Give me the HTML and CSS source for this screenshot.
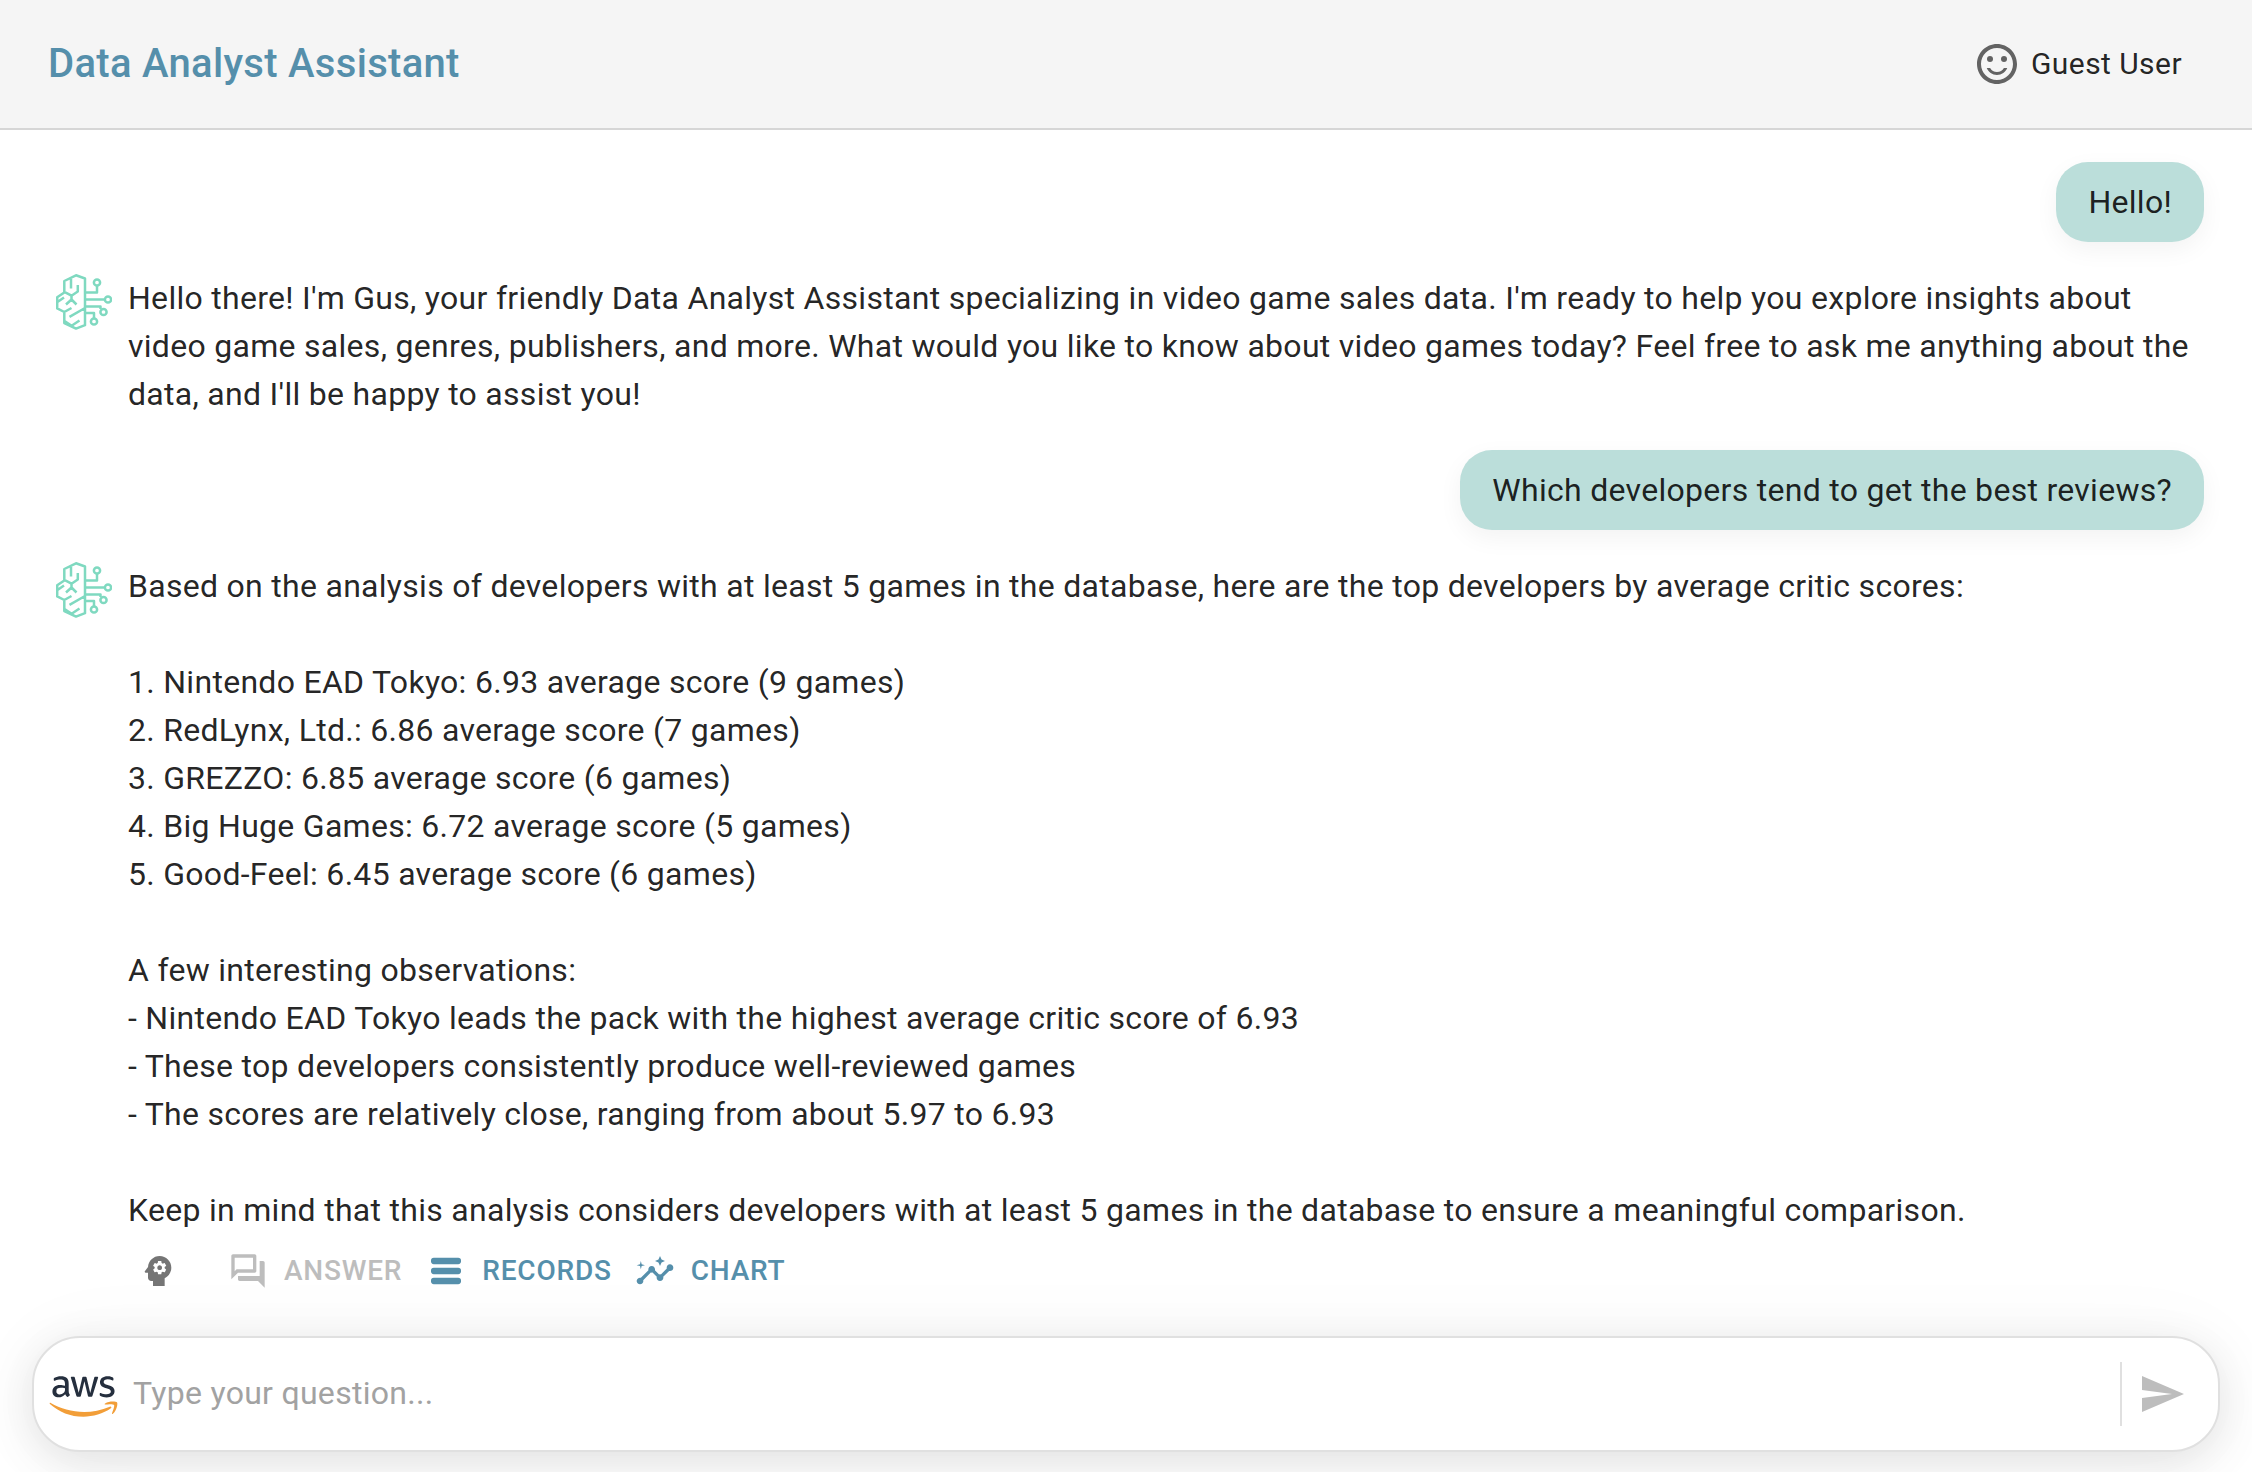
FILE: index.html
```html
<!DOCTYPE html>
<html lang="en">
<head>
<meta charset="utf-8">
<title>Data Analyst Assistant</title>
<link rel="stylesheet" href="styles.css">
</head>
<body>
<svg class="sprite" aria-hidden="true">
  <symbol id="brain" viewBox="0 0 56 56">
    <g fill="none" stroke="#7fd9c0" stroke-width="2.5" stroke-linejoin="round">
      <path d="M29 4.500 20 1.300 8.300 7v11.500L1.200 23.300v11L8.300 38v11L20 54.600l9-3.400zM15 5v9.500M21.800 11v6.500L15.500 21.700 8.300 17.800M15.500 21.700v4M10 30.500l5.500-5 5 5M1.500 28l6.500-4.500M8.300 38l7.200-4M13.500 42.800 29 34M8.500 47l7.500 5M16 51.500l7.500-5"/>
      <path d="M30 18.500h11V12M30 25.500h18.500M30 32.500h14.500v2.500M30 39h8v5"/>
      <circle cx="41" cy="8.500" r="3.100"/><circle cx="52" cy="25.500" r="3.100"/><circle cx="47.500" cy="38" r="3.100"/><circle cx="38" cy="47.500" r="3.100"/>
    </g>
  </symbol>
</svg>
<header class="topbar">
  <h1 class="brand">Data Analyst Assistant</h1>
  <div class="user">
    <svg class="user-icon" viewBox="0 0 24 24"><circle cx="15.5" cy="9.500" r="1.500"/><circle cx="8.500" cy="9.500" r="1.500"/><path d="M11.990 2C6.470 2 2 6.480 2 12s4.470 10 9.990 10C17.520 22 22 17.520 22 12S17.520 2 11.990 2M12 20c-4.420 0-8-3.580-8-8s3.580-8 8-8 8 3.580 8 8-3.580 8-8 8m0-4c-1.480 0-2.750-.81-3.450-2H6.880c.8 2.050 2.790 3.500 5.120 3.500s4.320-1.450 5.120-3.500h-1.670c-.7 1.190-1.970 2-3.450 2"/></svg>
    <span>Guest User</span>
  </div>
</header>
<main class="chat">
  <div class="bubble">Hello!</div>
  <section class="reply">
    <svg class="avatar"><use href="#brain"/></svg>
    <p class="text">Hello there! I'm Gus, your friendly Data Analyst Assistant specializing in video game sales data. I'm ready to help you explore insights about video game sales, genres, publishers, and more. What would you like to know about video games today? Feel free to ask me anything about the data, and I'll be happy to assist you!</p>
  </section>
  <div class="bubble">Which developers tend to get the best reviews?</div>
  <section class="reply">
    <svg class="avatar"><use href="#brain"/></svg>
    <div>
      <p class="text">Based on the analysis of developers with at least 5 games in the database, here are the top developers by average critic scores:

1. Nintendo EAD Tokyo: 6.93 average score (9 games)
2. RedLynx, Ltd.: 6.86 average score (7 games)
3. GREZZO: 6.85 average score (6 games)
4. Big Huge Games: 6.72 average score (5 games)
5. Good-Feel: 6.45 average score (6 games)

A few interesting observations:
- Nintendo EAD Tokyo leads the pack with the highest average critic score of 6.93
- These top developers consistently produce well-reviewed games
- The scores are relatively close, ranging from about 5.97 to 6.93

Keep in mind that this analysis considers developers with at least 5 games in the database to ensure a meaningful comparison.</p>
      <div class="actions">
        <svg class="thinking" viewBox="0 0 24 24"><path d="M13 8.570c-.79 0-1.430.64-1.430 1.430s.64 1.430 1.430 1.430 1.430-.64 1.430-1.430-.64-1.430-1.430-1.430"/><path d="M13 3C9.250 3 6.200 5.940 6.020 9.640L4.100 12.200c-.25.330-.01.800.400.800H6v3c0 1.100.900 2 2 2h1v3h7v-4.680c2.360-1.120 4-3.530 4-6.320 0-3.870-3.130-7-7-7m3 7c0 .130-.01.260-.02.390l.83.660c.08.060.100.160.05.250l-.8 1.390c-.05.090-.16.120-.24.090l-.99-.4c-.21.160-.43.290-.67.390L14 13.830c-.01.100-.1.170-.2.170h-1.600c-.1 0-.18-.07-.2-.17l-.15-1.060c-.25-.1-.47-.23-.68-.39l-.99.400c-.09.030-.2 0-.25-.09l-.8-1.390c-.05-.08-.03-.19.050-.25l.84-.66c-.01-.13-.02-.26-.02-.39s.02-.27.040-.39l-.85-.66c-.08-.06-.1-.16-.05-.26l.8-1.380c.05-.09.150-.12.240-.09l1 .4c.2-.15.430-.29.670-.39L12 6.170c.02-.1.100-.17.200-.17h1.600c.1 0 .180.070.200.170l.15 1.060c.24.100.460.230.670.390l1-.4c.09-.03.200 0 .240.090l.8 1.380c.05.090.030.200-.05.260l-.85.660c.03.120.040.250.040.390"/></svg>
        <button class="action answer" disabled><svg viewBox="0 0 24 24"><path d="M15 4v7H5.170L4 12.170V4zm1-2H3c-.55 0-1 .45-1 1v14l4-4h10c.55 0 1-.45 1-1V3c0-.55-.45-1-1-1m5 4h-2v9H6v2c0 .55.450 1 1 1h11l4 4V7c0-.55-.45-1-1-1"/></svg>ANSWER</button>
        <button class="action records"><svg viewBox="0 0 24 24"><rect x="3" y="4" width="18" height="3.900" rx="1.700"/><rect x="3" y="10" width="18" height="3.900" rx="1.700"/><rect x="3" y="16" width="18" height="3.900" rx="1.700"/></svg>RECORDS</button>
        <button class="action chart"><svg viewBox="0 0 24 24"><path d="M21 8c-1.450 0-2.260 1.440-1.930 2.510l-3.550 3.560c-.3-.09-.74-.09-1.040 0l-2.550-2.550C12.270 10.450 11.460 9 10 9c-1.450 0-2.270 1.440-1.930 2.520l-4.560 4.550C2.440 15.740 1 16.550 1 18c0 1.100.900 2 2 2 1.450 0 2.260-1.440 1.930-2.510l4.550-4.560c.3.090.740.090 1.040 0l2.550 2.550C12.730 16.550 13.540 18 15 18c1.450 0 2.270-1.440 1.930-2.520l3.560-3.550c1.070.330 2.510-.48 2.510-1.930 0-1.100-.9-2-2-2"/><path d="m15 9 .940-2.070L18 6l-2.060-.93L15 3l-.92 2.070L12 6l2.080.930zM3.500 11 4 9l2-.5L4 8l-.5-2L3 8l-2 .5L3 9z"/></svg>CHART</button>
      </div>
    </div>
  </section>
</main>
<footer class="composer">
  <svg class="aws" viewBox="0 0 304 182"><path fill="#252f3e" d="M86.400 66.400c0 3.700.400 6.700 1.100 8.900.8 2.200 1.800 4.600 3.200 7.200.5.800.700 1.600.700 2.300 0 1-.6 2-1.900 3l-6.300 4.200c-.9.600-1.800.900-2.600.900-1 0-2-.5-3-1.400-1.400-1.500-2.600-3.100-3.600-4.700-1-1.700-2-3.600-3.100-5.900-7.800 9.200-17.600 13.800-29.400 13.800-8.400 0-15.100-2.400-20-7.200-4.900-4.800-7.400-11.200-7.400-19.200 0-8.500 3-15.400 9.100-20.600 6.100-5.200 14.200-7.800 24.500-7.800 3.400 0 6.900.3 10.600.8 3.700.5 7.500 1.300 11.500 2.200v-7.300c0-7.600-1.600-12.900-4.700-16-3.200-3.100-8.600-4.600-16.300-4.600-3.500 0-7.100.4-10.800 1.300-3.700.9-7.300 2-10.800 3.400-1.600.7-2.800 1.100-3.500 1.300-.7.200-1.200.3-1.600.3-1.400 0-2.100-1-2.100-3.100v-4.900c0-1.600.2-2.800.7-3.500.5-.7 1.400-1.400 2.800-2.100 3.500-1.800 7.700-3.300 12.600-4.500 4.900-1.300 10.100-1.900 15.600-1.900 11.900 0 20.600 2.700 26.200 8.100 5.500 5.400 8.300 13.600 8.300 24.600v32.400zM45.800 81.600c3.300 0 6.700-.6 10.300-1.800 3.600-1.200 6.800-3.400 9.500-6.400 1.600-1.900 2.800-4 3.400-6.400.6-2.400 1-5.300 1-8.700v-4.200c-2.900-.7-6-1.300-9.200-1.700-3.200-.4-6.300-.6-9.400-.6-6.700 0-11.600 1.300-14.900 4-3.300 2.700-4.900 6.500-4.900 11.500 0 4.700 1.200 8.200 3.700 10.600 2.400 2.500 5.900 3.700 10.500 3.700zm80.300 10.800c-1.800 0-3-.3-3.800-1-.8-.6-1.500-2-2.100-3.900L96.700 10.200c-.6-2-.9-3.300-.9-4 0-1.600.8-2.500 2.400-2.500h9.800c1.900 0 3.200.3 3.900 1 .8.600 1.400 2 2 3.900l16.800 66.200 15.600-66.200c.5-2 1.100-3.300 1.900-3.900.8-.6 2.200-1 4-1h8c1.900 0 3.200.3 4 1 .8.600 1.500 2 1.900 3.900l15.800 67 17.300-67c.6-2 1.300-3.300 2-3.900.8-.6 2.100-1 3.900-1h9.300c1.600 0 2.500.8 2.500 2.500 0 .5-.1 1-.2 1.600-.1.600-.3 1.400-.7 2.500l-24.100 77.300c-.6 2-1.300 3.300-2.100 3.900-.8.600-2.100 1-3.800 1h-8.600c-1.900 0-3.200-.3-4-1-.8-.7-1.500-2-1.900-4L156 23l-15.400 64.400c-.5 2-1.100 3.300-1.900 4-.8.700-2.200 1-4 1zm128.500 2.700c-5.200 0-10.400-.6-15.400-1.800-5-1.200-8.900-2.500-11.500-4-1.600-.9-2.700-1.900-3.100-2.800-.4-.9-.6-1.900-.6-2.800v-5.100c0-2.100.8-3.100 2.300-3.100.6 0 1.200.1 1.800.3.600.2 1.500.6 2.500 1 3.400 1.500 7.100 2.700 11 3.500 4 .8 7.900 1.200 11.900 1.200 6.300 0 11.200-1.100 14.600-3.300 3.400-2.200 5.200-5.400 5.200-9.500 0-2.800-.9-5.100-2.700-7-1.800-1.900-5.200-3.600-10.100-5.200L246 52c-7.300-2.300-12.700-5.700-16-10.200-3.300-4.400-5-9.300-5-14.500 0-4.200.9-7.900 2.700-11.100 1.800-3.200 4.200-6 7.200-8.200 3-2.300 6.400-4 10.400-5.200 4-1.200 8.200-1.700 12.600-1.700 2.200 0 4.500.1 6.700.4 2.300.3 4.400.7 6.500 1.100 2 .5 3.900 1 5.700 1.600 1.800.6 3.200 1.200 4.200 1.800 1.400.8 2.400 1.600 3 2.500.6.800.9 1.900.9 3.300v4.700c0 2.100-.8 3.200-2.300 3.200-.8 0-2.100-.4-3.800-1.200-5.700-2.600-12.100-3.900-19.200-3.900-5.700 0-10.200.9-13.300 2.800-3.100 1.900-4.700 4.800-4.700 8.900 0 2.800 1 5.200 3 7.100 2 1.900 5.700 3.800 11 5.500l14.200 4.500c7.200 2.300 12.400 5.500 15.500 9.600 3.100 4.100 4.600 8.800 4.600 14 0 4.300-.9 8.200-2.600 11.600-1.800 3.400-4.200 6.400-7.300 8.800-3.100 2.500-6.800 4.300-11.100 5.600-4.500 1.400-9.200 2.100-14.300 2.100z"/><path fill="#f29e38" d="M273.500 143.700c-32.900 24.300-80.700 37.200-121.800 37.200-57.600 0-109.500-21.300-148.700-56.700-3.100-2.800-.3-6.600 3.400-4.400 42.400 24.600 94.700 39.500 148.800 39.500 36.500 0 76.600-7.600 113.500-23.200 5.500-2.500 10.200 3.600 4.800 7.600z"/><path fill="#f29e38" d="M287.200 128.100c-4.200-5.400-27.800-2.600-38.500-1.300-3.200.4-3.700-2.400-.8-4.500 18.800-13.200 49.700-9.400 53.300-5 3.600 4.500-1 35.400-18.600 50.200-2.700 2.300-5.300 1.100-4.100-1.900 4-9.900 12.900-32.200 8.700-37.500z"/></svg>
  <input class="question" type="text" placeholder="Type your question...">
  <span class="divider"></span>
  <svg class="send" viewBox="0 0 24 24"><path d="M2.010 21 23 12 2.010 3 2 10l15 2-15 2z"/></svg>
</footer>
</body>
</html>
```
FILE: styles.css
```css
* { box-sizing: border-box; }

body {
  margin: 0;
  height: 1472px;
  display: flex;
  flex-direction: column;
  overflow: hidden;
  background: #fff;
  color: rgba(0, 0, 0, 0.87);
  font: 400 32px/48px Roboto, sans-serif;
  letter-spacing: 0.29px;
}

.sprite { display: none; }

.topbar {
  flex: none;
  height: 130px;
  padding: 0 70px 0 48px;
  display: flex;
  align-items: center;
  justify-content: space-between;
  background: #f5f5f5;
  border-bottom: 2px solid #d6d6d6;
}

.brand {
  margin: 0;
  color: #558fab;
  font-size: 40px;
  font-weight: 500;
  letter-spacing: 0.0075em;
}

.user {
  display: flex;
  align-items: center;
  gap: 10px;
  font-size: 30px;
  letter-spacing: 0.44px;
}

.user-icon { width: 48px; height: 48px; fill: #636363; }

.chat {
  flex: 1;
  min-height: 0;
  padding: 32px 48px 0;
  display: flex;
  flex-direction: column;
  gap: 32px;
}

.bubble {
  align-self: flex-end;
  padding: 16px 32px;
  border-radius: 32px;
  background: #bbdeda;
  box-shadow: 0 8px 24px rgba(0, 0, 0, 0.05);
}

.reply {
  display: flex;
  align-items: flex-start;
  gap: 16px;
  padding-left: 8px;
}

.avatar { flex: none; width: 56px; height: 56px; }

.text { margin: 0; white-space: pre-wrap; }

.actions {
  height: 74px;
  display: flex;
  align-items: center;
}

.thinking {
  width: 40px;
  height: 40px;
  margin: 0 50px 0 10px;
  fill: #757575;
}

.action {
  display: flex;
  align-items: center;
  gap: 16px;
  padding: 0;
  border: 0;
  background: none;
  color: #558fab;
  font: 500 28px/48px Roboto, sans-serif;
  letter-spacing: 0.02857em;
}

.action svg { width: 40px; height: 40px; fill: currentColor; }
.answer { color: #bdbdbd; margin-right: 24px; }
.records { margin-right: 23px; }

.composer {
  position: relative;
  flex: none;
  height: 116px;
  margin: 0 32px 20px;
  padding: 0 32px 0 15px;
  display: flex;
  align-items: center;
  border: 2px solid #e0e0e0;
  border-radius: 48px;
  background: #fff;
  box-shadow: 0 10px 44px rgba(0, 0, 0, 0.1), 0 4px 88px rgba(0, 0, 0, 0.04);
}

.aws { width: 69px; height: 41px; margin-top: 4px; }

.question {
  flex: 1;
  margin: 0 0 2px 15px;
  padding: 0;
  border: 0;
  outline: 0;
  background: none;
  color: inherit;
  font: inherit;
  letter-spacing: inherit;
}

.question::placeholder { color: #a2a2a2; opacity: 1; }

.divider { width: 2px; height: 64px; background: #e0e0e0; }
.send { width: 48px; height: 48px; margin-left: 16px; fill: #bdbdbd; }
```
